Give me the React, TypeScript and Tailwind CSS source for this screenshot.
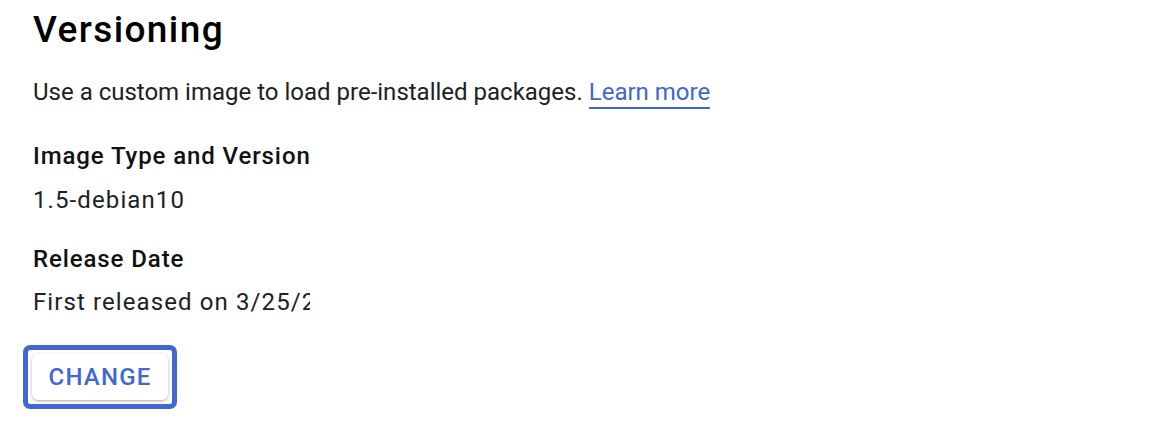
export default function App() {
  return (
    <div className="h-[426px] w-[1166px] bg-white pl-[33px] pt-[5px] text-[#202124]" style={{ fontFamily: "Roboto, 'Liberation Sans', sans-serif" }}>
      <h1 className="text-[37px] font-medium leading-[49px] tracking-[1.4px] text-black">Versioning</h1>
      <p className="mt-[22px] text-[24px] leading-[32px] text-[#202124]">
        Use a custom image to load pre-installed packages.{" "}
        <a className="border-b-2 border-[#3c67d3] pb-[1px] text-[#3c67d3]">Learn more</a>
      </p>
      <div className="mt-[32px] w-[277px] overflow-hidden whitespace-nowrap">
        <div className="text-[24px] font-medium leading-[32px] tracking-[0.9px] text-[#111]">Image Type and Version</div>
        <div className="mt-[12px] text-[24px] leading-[32px] tracking-[1.1px] text-[#202124]">1.5-debian10</div>
        <div className="mt-[27px] text-[24px] font-medium leading-[32px] tracking-[0.9px] text-[#111]">Release Date</div>
        <div className="mt-[11px] text-[24px] leading-[32px] tracking-[1.1px] text-[#202124]">First released on 3/25/2021</div>
      </div>
      <div className="-ml-[10px] mt-[27px] inline-flex rounded-[7px] border-[5px] border-[#3f68d2] p-[4px]">
        <button className="h-[46px] w-[136px] rounded-[6px] bg-white text-[24px] font-medium tracking-[1.2px] text-[#3f68d2] shadow-[0_1px_3px_rgba(0,0,0,0.35)]">
          CHANGE
        </button>
      </div>
    </div>
  );
}
